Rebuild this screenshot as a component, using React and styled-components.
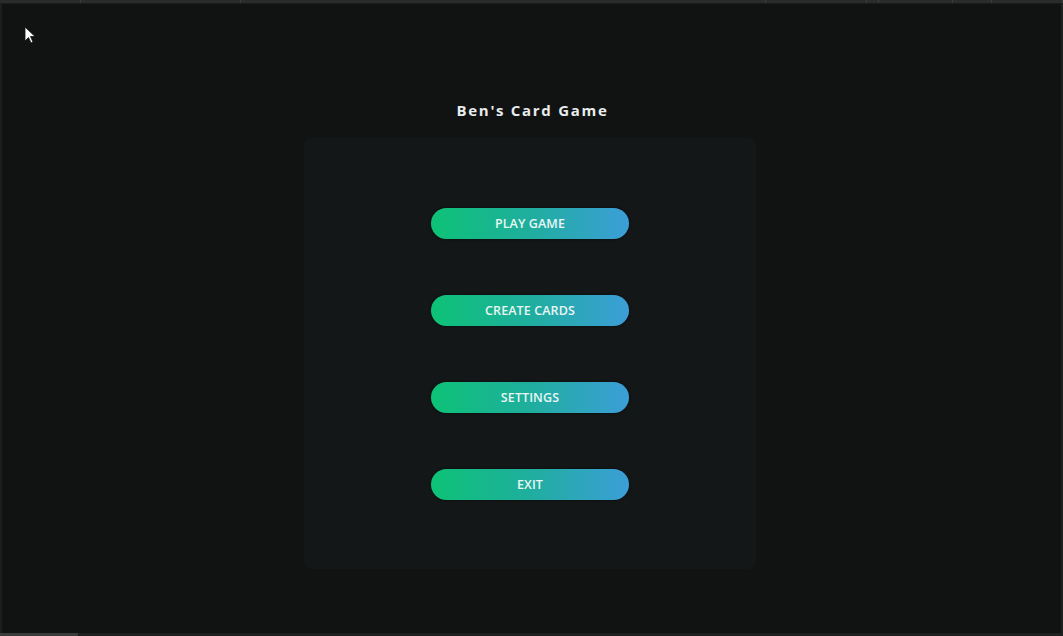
import React from "react";
import styled, { createGlobalStyle } from "styled-components";

const Global = createGlobalStyle`
  html, body { margin: 0; padding: 0; background: #111313; }
  body { font-family: "Open Sans", "Noto Sans", sans-serif; overflow: hidden; }
  #root { height: 636px; }
`;

const Frame = styled.div`
  position: relative;
  width: 1063px;
  height: 636px;
  box-sizing: border-box;
  padding-right: 3px;
  background: #111313;
  box-shadow: inset 2px 0 0 #1c1e1e, inset -2px 0 0 #1f2121;
  display: flex;
  flex-direction: column;
  align-items: center;
`;

const TopBar = styled.div`
  align-self: stretch;
  margin-right: -3px;
  height: 3px;
  background: #2a2c2c;
  display: flex;
  border-bottom: 1px solid #1a1c1c;
`;

const TopSeg = styled.div`
  width: ${(p) => p.w}px;
  border-right: 1px solid #3a3c3c;
  flex: ${(p) => (p.grow ? 1 : "none")};
`;

const Title = styled.h1`
  margin: 96px 0 0;
  font-size: 15px;
  font-weight: 700;
  letter-spacing: 1.7px;
  color: #e9ecec;
  line-height: 20px;
  padding-left: 5px;
`;

const Panel = styled.div`
  margin-top: 18px;
  width: 452px;
  height: 431px;
  box-sizing: border-box;
  background: #131717;
  border-radius: 7px;
  display: flex;
  flex-direction: column;
  align-items: center;
  justify-content: center;
  gap: 56px;
`;

const MenuButton = styled.button`
  width: 198px;
  height: 31px;
  border: none;
  border-radius: 16px;
  background: linear-gradient(90deg, #0dc276 0%, #1fae9e 50%, #3c9ed8 100%);
  box-shadow: 0 0 3px rgba(0, 0, 0, 0.6);
  color: #eaf6f3;
  font-family: "Open Sans", "Noto Sans", sans-serif;
  font-weight: 600;
  font-size: 12.5px;
  letter-spacing: 0.1px;
  cursor: pointer;
  padding: 0;
`;

const BottomBar = styled.div`
  position: absolute;
  left: 0;
  right: 0;
  bottom: 0;
  height: 3px;
  background: #1e2020;
  display: flex;
`;

const BottomSeg = styled.div`
  width: 78px;
  background: #3a3c3c;
`;

const Cursor = styled.svg`
  position: absolute;
  left: 24px;
  top: 26px;
`;

export default function App() {
  const items = ["PLAY GAME", "CREATE CARDS", "SETTINGS", "EXIT"];
  return (
    <>
      <Global />
      <Frame>
        <TopBar>
          <TopSeg w={80} />
          <TopSeg w={159} />
          <TopSeg grow />
          <TopSeg w={100} />
          <TopSeg w={11} />
          <TopSeg w={73} />
          <TopSeg w={38} />
          <TopSeg w={70} />
        </TopBar>
        <Title>Ben's Card Game</Title>
        <Panel>
          {items.map((t) => (
            <MenuButton key={t}>{t}</MenuButton>
          ))}
        </Panel>
        <BottomBar>
          <BottomSeg />
        </BottomBar>
        <Cursor width="12" height="18" viewBox="0 0 12 18">
          <path d="M1 1 L1 15 L4.5 11.5 L7 17 L9 16 L6.5 10.5 L11 10.5 Z" fill="#ffffff" stroke="#111" strokeWidth="0.8" />
        </Cursor>
      </Frame>
    </>
  );
}
